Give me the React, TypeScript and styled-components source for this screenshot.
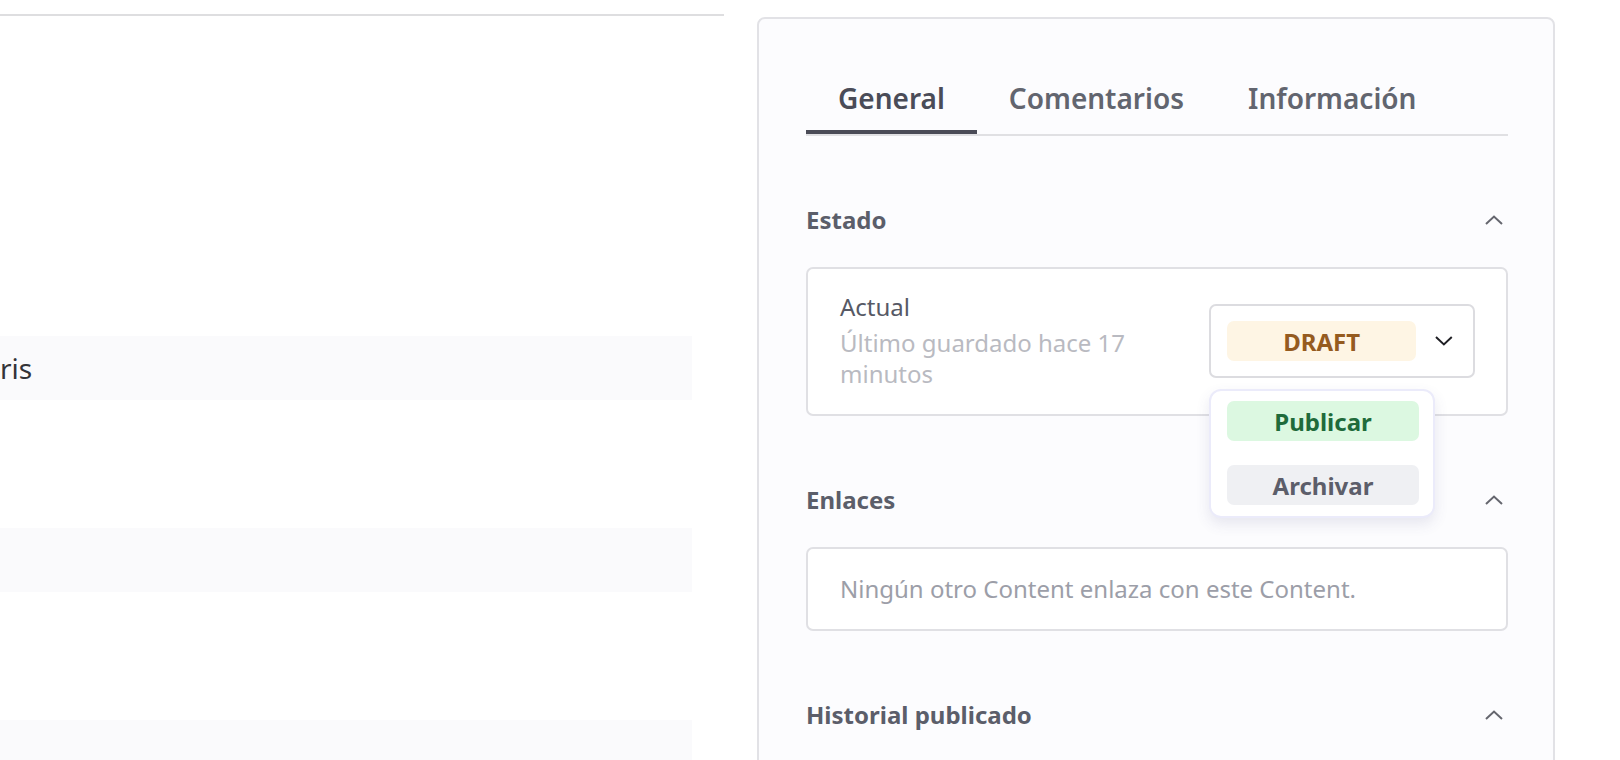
import React, { useState } from 'react';
import styled, { createGlobalStyle } from 'styled-components';

const GlobalStyle = createGlobalStyle`
  html, body {
    margin: 0;
    padding: 0;
    background: #ffffff;
    font-family: "Noto Sans", "Open Sans", sans-serif;
  }
  * { box-sizing: border-box; }
`;

const Page = styled.div`
  display: flex;
  align-items: flex-start;
  width: 1620px;
  height: 760px;
  overflow: hidden;
  padding-top: 14px;
`;

const LeftColumn = styled.div`
  width: 724px;
  flex: none;
  border-top: 2px solid #dedee0;
`;

const Row = styled.div<{ shaded?: boolean }>`
  height: 64px;
  margin-right: 32px;
  display: flex;
  align-items: center;
  background: ${p => (p.shaded ? '#fafafc' : 'transparent')};
  font-size: 28px;
  color: #333338;
`;

const Panel = styled.div`
  margin-left: 33px;
  margin-top: 3px;
  width: 798px;
  height: 800px;
  flex: none;
  background: #fcfcfe;
  border: 2px solid #e2e2e6;
  border-radius: 8px;
  padding: 45px 45px 0 47px;
`;

const TabList = styled.div`
  display: flex;
  border-bottom: 2px solid #e0e0e3;
`;

const Tab = styled.button<{ active?: boolean }>`
  font-family: inherit;
  background: none;
  border: none;
  border-bottom: 4px solid ${p => (p.active ? '#4a4b57' : 'transparent')};
  padding: 15px 32px 13px;
  font-size: 28px;
  line-height: 38px;
  font-weight: 600;
  color: ${p => (p.active ? '#4a4c58' : '#62656f')};
  cursor: pointer;
`;

const Section = styled.section`
  margin-top: 67px;
`;

const SectionHeader = styled.div`
  display: flex;
  align-items: center;
  justify-content: space-between;
  height: 34px;
  margin-bottom: 30px;
`;

const SectionTitle = styled.h3`
  margin: 0;
  font-size: 24px;
  line-height: 34px;
  font-weight: 700;
  color: #5b5e6a;
`;

const ChevronButton = styled.span`
  display: flex;
  margin-right: 5px;
  color: #65666e;
`;

const Card = styled.div`
  position: relative;
  background: #ffffff;
  border: 2px solid #e0e0e4;
  border-radius: 7px;
`;

const StateCard = styled(Card)`
  display: flex;
  align-items: center;
  gap: 28px;
  padding: 24px 31px 25px 32px;
`;

const StateText = styled.div`
  flex: 1;
  min-width: 0;
`;

const StateLabel = styled.div`
  font-size: 24px;
  line-height: 28px;
  margin-bottom: 6px;
  color: #565965;
`;

const StateSub = styled.div`
  font-size: 24px;
  line-height: 31px;
  color: #b9bac1;
`;

const SelectWrap = styled.div`
  position: relative;
  flex: none;
`;

const SelectBox = styled.div`
  width: 266px;
  height: 74px;
  border: 2px solid #dcdce0;
  border-radius: 7px;
  background: #fff;
  display: flex;
  align-items: center;
  padding: 0 20px 0 16px;
  gap: 19px;
`;

const tones = {
  draft: { bg: '#fef5e4', fg: '#955b1f' },
  publish: { bg: '#dcf8e1', fg: '#1f6b3b' },
  archive: { bg: '#eff0f3', fg: '#5c5e6a' },
};

const Badge = styled.div<{ tone: keyof typeof tones }>`
  width: 192px;
  height: 40px;
  border-radius: 7px;
  display: flex;
  align-items: center;
  justify-content: center;
  font-size: 24px;
  font-weight: 700;
  background: ${p => tones[p.tone].bg};
  color: ${p => tones[p.tone].fg};
`;

const Menu = styled.div`
  position: absolute;
  top: 85px;
  left: 0;
  width: 226px;
  background: #ffffff;
  border: 2px solid #ebebfa;
  border-radius: 12px;
  box-shadow: 0 6px 14px rgba(70, 70, 130, 0.12);
  padding: 10px 14px 11px 16px;
  display: flex;
  flex-direction: column;
  gap: 24px;
  z-index: 2;
`;

const LinksCard = styled(Card)`
  padding: 23px 32px 23px;
  font-size: 24px;
  line-height: 34px;
  color: #9c9ea8;
`;

const ChevronUp = () => (
  <svg width="18" height="10" viewBox="0 0 18 10" fill="none">
    <path d="M1 9 L9 1.5 L17 9" stroke="currentColor" strokeWidth="2" />
  </svg>
);

const ChevronDown = () => (
  <svg width="18" height="10" viewBox="0 0 18 10" fill="none">
    <path d="M1 1 L9 8.5 L17 1" stroke="#1f1f24" strokeWidth="2" />
  </svg>
);

const App: React.FC = () => {
  const [tab, setTab] = useState('general');
  const tabs = [
    { id: 'general', label: 'General' },
    { id: 'comments', label: 'Comentarios' },
    { id: 'info', label: 'Información' },
  ];
  const rows = Array.from({ length: 12 }, (_, i) => i);

  return (
    <>
      <GlobalStyle />
      <Page>
        <LeftColumn>
          {rows.map(i => (
            <Row key={i} shaded={i >= 5 && (i - 5) % 3 === 0}>
              {i === 5 ? 'ris' : null}
            </Row>
          ))}
        </LeftColumn>

        <Panel>
          <TabList>
            {tabs.map(t => (
              <Tab key={t.id} active={tab === t.id} onClick={() => setTab(t.id)}>
                {t.label}
              </Tab>
            ))}
          </TabList>

          <Section>
            <SectionHeader>
              <SectionTitle>Estado</SectionTitle>
              <ChevronButton><ChevronUp /></ChevronButton>
            </SectionHeader>
            <StateCard>
              <StateText>
                <StateLabel>Actual</StateLabel>
                <StateSub>Último guardado hace 17 minutos</StateSub>
              </StateText>
              <SelectWrap>
                <SelectBox>
                  <Badge tone="draft">DRAFT</Badge>
                  <ChevronDown />
                </SelectBox>
                <Menu>
                  <Badge tone="publish">Publicar</Badge>
                  <Badge tone="archive">Archivar</Badge>
                </Menu>
              </SelectWrap>
            </StateCard>
          </Section>

          <Section>
            <SectionHeader>
              <SectionTitle>Enlaces</SectionTitle>
              <ChevronButton><ChevronUp /></ChevronButton>
            </SectionHeader>
            <LinksCard>Ningún otro Content enlaza con este Content.</LinksCard>
          </Section>

          <Section>
            <SectionHeader>
              <SectionTitle>Historial publicado</SectionTitle>
              <ChevronButton><ChevronUp /></ChevronButton>
            </SectionHeader>
            <Card style={{ height: 80 }} />
          </Section>
        </Panel>
      </Page>
    </>
  );
};

export default App;
